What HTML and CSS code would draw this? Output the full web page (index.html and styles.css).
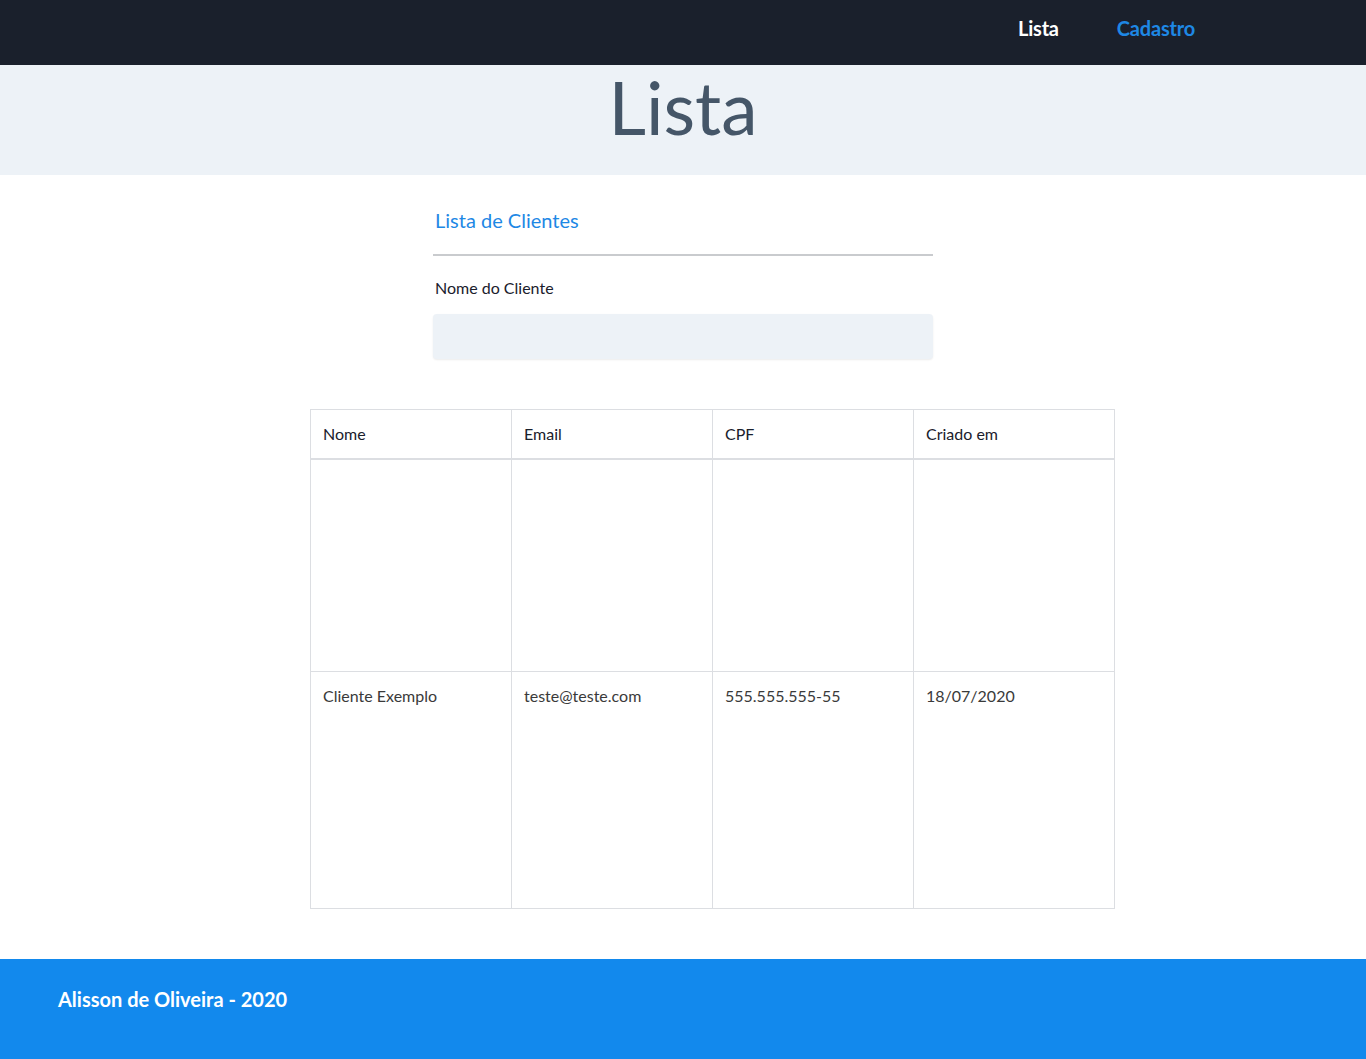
FILE: index.html
```html
<!DOCTYPE html>
<html lang="pt-BR">
<head>
<meta charset="utf-8">
<title>Lista</title>
<link rel="stylesheet" href="styles.css">
</head>
<body>
<nav class="navbar">
  <a class="nav-link active" href="#">Lista</a>
  <a class="nav-link" href="#">Cadastro</a>
</nav>
<header class="hero">
  <h1>Lista</h1>
</header>
<main class="main">
  <section class="panel">
    <h2 class="panel-title">Lista de Clientes</h2>
    <hr class="divider">
    <label class="label" for="nome">Nome do Cliente</label>
    <input class="input" id="nome" type="text">
  </section>
  <table class="table">
    <thead>
      <tr><th>Nome</th><th>Email</th><th>CPF</th><th>Criado em</th></tr>
    </thead>
    <tbody>
      <tr class="row-empty"><td></td><td></td><td></td><td></td></tr>
      <tr class="row-data"><td>Cliente Exemplo</td><td>teste@teste.com</td><td>555.555.555-55</td><td>18/07/2020</td></tr>
    </tbody>
  </table>
</main>
<footer class="footer">Alisson de Oliveira - 2020</footer>
</body>
</html>
```

FILE: styles.css
```css
* { box-sizing: border-box; }
html, body { margin: 0; padding: 0; }
body {
  font-family: Lato, "Noto Sans", sans-serif;
  color: #1a202c;
  background: #fff;
}
.navbar {
  height: 65px;
  background: #1a202c;
  display: flex;
  justify-content: flex-end;
  align-items: center;
  gap: 58px;
  padding: 0 171px 10px 0;
}
.nav-link {
  font-size: 20px;
  font-weight: 700;
  color: #1e88e5;
  text-decoration: none;
  letter-spacing: -0.2px;
}
.nav-link.active { color: #fff; }
.hero {
  height: 110px;
  background: #edf2f7;
  display: flex;
  justify-content: center;
}
.hero h1 {
  margin: 0;
  font-size: 73px;
  font-weight: 400;
  color: #455668;
  line-height: 84px;
}
.main {
  padding: 27px 0 50px;
  display: flex;
  flex-direction: column;
  align-items: center;
}
.panel {
  width: 500px;
  display: flex;
  flex-direction: column;
}
.panel-title {
  margin: 0 0 0 2px;
  font-size: 20px;
  font-weight: 400;
  color: #1e88e5;
  line-height: 36px;
}
.divider {
  width: 100%;
  margin: 16px 0 0;
  border: 0;
  border-top: 2px solid #c9cbce;
}
.label {
  margin: 21px 0 0 2px;
  font-size: 16px;
  line-height: 22px;
  color: #1a202c;
}
.input {
  margin-top: 15px;
  height: 45px;
  border: 0;
  border-radius: 4px;
  background: #edf2f7;
  box-shadow: 0 1px 2px rgba(0,0,0,0.08);
}
.table {
  margin: 50px 0 0 59px;
  width: 805px;
  border-collapse: collapse;
  table-layout: fixed;
}
.table th, .table td {
  border: 1px solid #dcdee2;
  padding: 12px 12px;
  text-align: left;
  vertical-align: top;
  font-size: 16px;
  line-height: 24px;
}
.table th {
  font-weight: 400;
  color: #1a202c;
  border-bottom: 2px solid #dcdee2;
}
.row-empty td { height: 212px; }
.row-data td {
  height: 237px;
  color: #3a3a3a;
  font-weight: 400;
}
.footer {
  height: 100px;
  background: #1289ed;
  color: #fff;
  font-size: 20px;
  font-weight: 700;
  padding: 28px 58px;
}
```
